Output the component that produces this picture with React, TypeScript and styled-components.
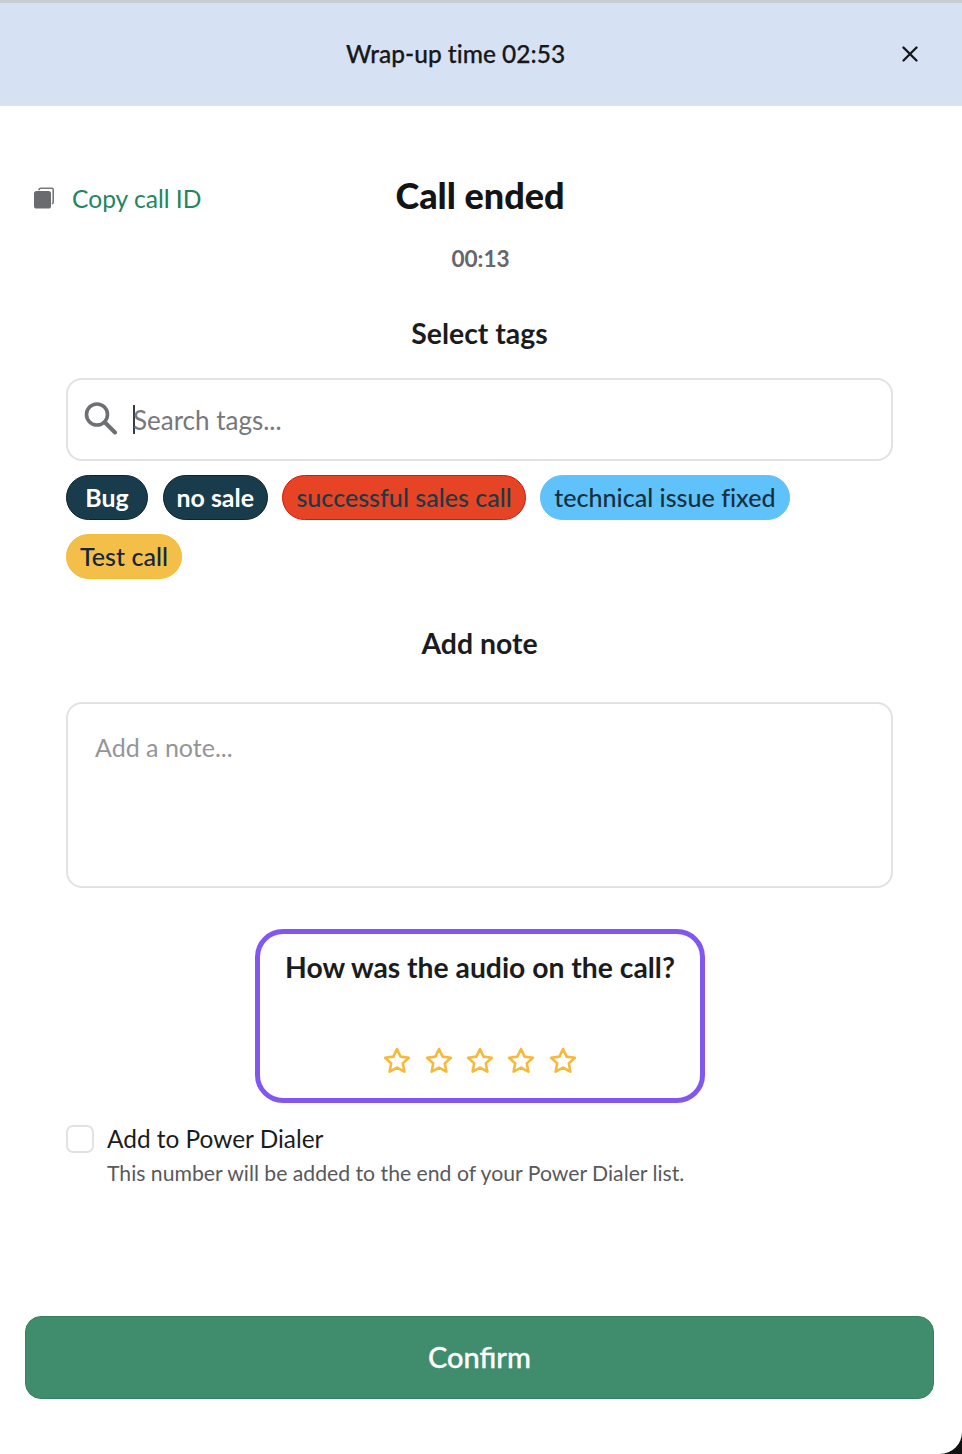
import React from 'react'
import styled, { createGlobalStyle } from 'styled-components'
import { X } from 'lucide-react'

const GlobalStyle = createGlobalStyle`
  html, body {
    margin: 0;
    padding: 0;
    background: #111;
  }
  * {
    box-sizing: border-box;
  }
  body {
    font-family: Lato, "Liberation Sans", sans-serif;
    font-variant-ligatures: none;
    color: #1b1c1e;
  }
`

const Modal = styled.div`
  width: 962px;
  height: 1454px;
  background: #fff;
  border-top: 3px solid #c9ccd3;
  border-bottom-right-radius: 22px;
  display: flex;
  flex-direction: column;
  overflow: hidden;
`

const Banner = styled.div`
  height: 103px;
  flex: none;
  background: #d6e2f4;
  display: grid;
  grid-template-columns: 1fr 48px;
  align-items: center;
  padding: 0 39px 3px 0;
`

const BannerText = styled.div`
  font-size: 24.5px;
  font-weight: 500;
  text-align: center;
  margin-left: 36px;
  color: #17181a;
  -webkit-text-stroke: 0.25px #17181a;
`

const CloseButton = styled.button`
  border: 0;
  background: none;
  padding: 0;
  margin-top: 2px;
  display: flex;
  justify-content: flex-end;
  color: #17181a;
`

const Head = styled.div`
  display: grid;
  grid-template-columns: 1fr auto 1fr;
  align-items: center;
  padding: 67px 35px 0 33px;
  height: 111px;
`

const CopyLink = styled.a`
  display: flex;
  align-items: center;
  gap: 17px;
  font-size: 24.6px;
  color: #23865f;
  padding-top: 6px;
`

const Title = styled.h1`
  margin: 0;
  font-size: 36px;
  font-weight: 900;
  color: #131416;
`

const Duration = styled.div`
  margin-top: 27px;
  padding-right: 1px;
  text-align: center;
  font-size: 22.6px;
  font-weight: 700;
  line-height: 30px;
  color: #66676a;
`

const Section = styled.section`
  padding: 0 69px 0 66px;
`

const SectionTitle = styled.h2<{ $top: number }>`
  margin: ${p => p.$top}px 0 0;
  text-align: center;
  font-size: 28.4px;
  font-weight: 700;
  line-height: 32px;
  color: #1b1c1e;
`

const SearchBox = styled.div`
  margin-top: 29px;
  height: 83px;
  display: flex;
  align-items: center;
  gap: 16px;
  padding: 0 15px;
  border: 2px solid #e2e2e4;
  border-radius: 16px;

  svg {
    margin-top: -4px;
  }
`

const Caret = styled.span`
  display: inline-block;
  width: 1.5px;
  height: 29px;
  background: #3a3b3e;
  margin-right: -1.5px;
  vertical-align: middle;
`

const Placeholder = styled.span`
  font-size: 26px;
  color: #77787b;
  display: flex;
  align-items: center;
`

const TagList = styled.div`
  display: flex;
  flex-wrap: wrap;
  gap: 14px 14.5px;
  margin-top: 14px;
`

const Tag = styled.span<{ $bg: string; $edge: string; $fg: string; $bold?: boolean }>`
  height: 45px;
  min-width: 82px;
  padding: 0 13px 2px;
  display: flex;
  align-items: center;
  justify-content: center;
  border-radius: 23px;
  border: 1px solid ${p => p.$edge};
  background: ${p => p.$bg};
  color: ${p => p.$fg};
  font-size: ${p => (p.$bold ? 24.9 : 25.1)}px;
  font-weight: ${p => (p.$bold ? 700 : 500)};
`

const NoteBox = styled.div`
  margin-top: 43px;
  height: 186px;
  padding: 28px 27px;
  border: 2px solid #e2e2e4;
  border-radius: 16px;
  font-size: 25px;
  line-height: 30px;
  color: #949597;
`

const RatingCard = styled.div`
  width: 450px;
  height: 174px;
  margin: 41px auto 0 255px;
  border: 5px solid #8257f0;
  border-radius: 28px;
  display: flex;
  flex-direction: column;
  align-items: center;
  padding-top: 16px;
`

const RatingTitle = styled.div`
  font-size: 28.3px;
  font-weight: 700;
  line-height: 34px;
  color: #1b1c1e;
`

const Stars = styled.div`
  margin-top: 63px;
  display: flex;
  gap: 13.3px;
`

const DialerRow = styled.label`
  display: grid;
  grid-template-columns: 28px 1fr;
  column-gap: 13px;
  margin-top: 20px;
  padding-left: 66px;
`

const CheckBox = styled.span`
  width: 28px;
  height: 28px;
  border: 2px solid #e2e2e4;
  border-radius: 7px;
  margin-top: 2px;
`

const DialerLabel = styled.div`
  font-size: 24.4px;
  line-height: 32px;
  color: #1b1c1e;
`

const DialerHint = styled.div`
  grid-column: 2;
  margin-top: 5px;
  font-size: 21.2px;
  line-height: 26px;
  color: #58595c;
`

const Footer = styled.div`
  margin-top: auto;
  padding: 0 28px 55px 25px;
`

const ConfirmButton = styled.button`
  width: 100%;
  height: 83px;
  padding-bottom: 3px;
  border: 1px solid #37805f;
  border-radius: 16px;
  background: #408d6e;
  color: #fff;
  font-family: inherit;
  font-size: 29px;
  font-weight: 500;
  -webkit-text-stroke: 0.3px #fff;
`

const CopyIcon = () => (
  <svg width="22" height="22" viewBox="0 0 22 22" fill="none">
    <path d="M6 3.2C6 2 6.8 1.2 8 1.2h11c.7 0 1.2.5 1.2 1.2v12.8c0 1-.6 1.6-1.4 1.6" stroke="#77787b" strokeWidth="1.6" />
    <rect x="1" y="4" width="17" height="17.5" rx="2.6" fill="#6a6b6e" />
  </svg>
)

const SearchIcon = () => (
  <svg width="34" height="34" viewBox="0 0 34 34" fill="none" stroke="#6e6f72" strokeLinecap="round">
    <circle cx="14" cy="13.5" r="10.5" strokeWidth="3.6" />
    <path d="M22 21.5 32 31.5" strokeWidth="4" />
  </svg>
)

const StarIcon = () => (
  <svg width="28" height="27" viewBox="0 0 28 27" fill="none">
    <path
      d="M14 2 17.6 9.6 25.9 10.7 19.8 16.4 21.4 24.7 14 20.6 6.6 24.7 8.2 16.4 2.1 10.7 10.4 9.6Z"
      stroke="#f6b93b"
      strokeWidth="2.6"
      strokeLinejoin="round"
    />
  </svg>
)

const tags = [
  { name: 'Bug', bg: '#183c4c', edge: '#10222e', fg: '#fff', bold: true },
  { name: 'no sale', bg: '#183c4c', edge: '#10222e', fg: '#fff', bold: true },
  { name: 'successful sales call', bg: '#e64424', edge: '#e0140c', fg: '#1c3a45' },
  { name: 'technical issue fixed', bg: '#5fc2fa', edge: '#5fc2fa', fg: '#17303e' },
  { name: 'Test call', bg: '#f4bf49', edge: '#f4bd35', fg: '#17253a' },
]

export default function App() {
  return (
    <>
      <GlobalStyle />
      <Modal>
        <Banner>
          <BannerText>Wrap-up time 02:53</BannerText>
          <CloseButton>
            <X size={26} strokeWidth={2.2} />
          </CloseButton>
        </Banner>

        <Head>
          <CopyLink>
            <CopyIcon />
            Copy call ID
          </CopyLink>
          <Title>Call ended</Title>
        </Head>
        <Duration>00:13</Duration>

        <Section>
          <SectionTitle $top={43}>Select tags</SectionTitle>
          <SearchBox>
            <SearchIcon />
            <Placeholder>
              <Caret />
              Search tags...
            </Placeholder>
          </SearchBox>
          <TagList>
            {tags.map(tag => (
              <Tag key={tag.name} $bg={tag.bg} $edge={tag.edge} $fg={tag.fg} $bold={tag.bold}>
                {tag.name}
              </Tag>
            ))}
          </TagList>

          <SectionTitle $top={48}>Add note</SectionTitle>
          <NoteBox>Add a note...</NoteBox>
        </Section>

        <RatingCard>
          <RatingTitle>How was the audio on the call?</RatingTitle>
          <Stars>
            {[0, 1, 2, 3, 4].map(i => (
              <StarIcon key={i} />
            ))}
          </Stars>
        </RatingCard>

        <DialerRow>
          <CheckBox />
          <DialerLabel>Add to Power Dialer</DialerLabel>
          <DialerHint>This number will be added to the end of your Power Dialer list.</DialerHint>
        </DialerRow>

        <Footer>
          <ConfirmButton>Confirm</ConfirmButton>
        </Footer>
      </Modal>
    </>
  )
}
